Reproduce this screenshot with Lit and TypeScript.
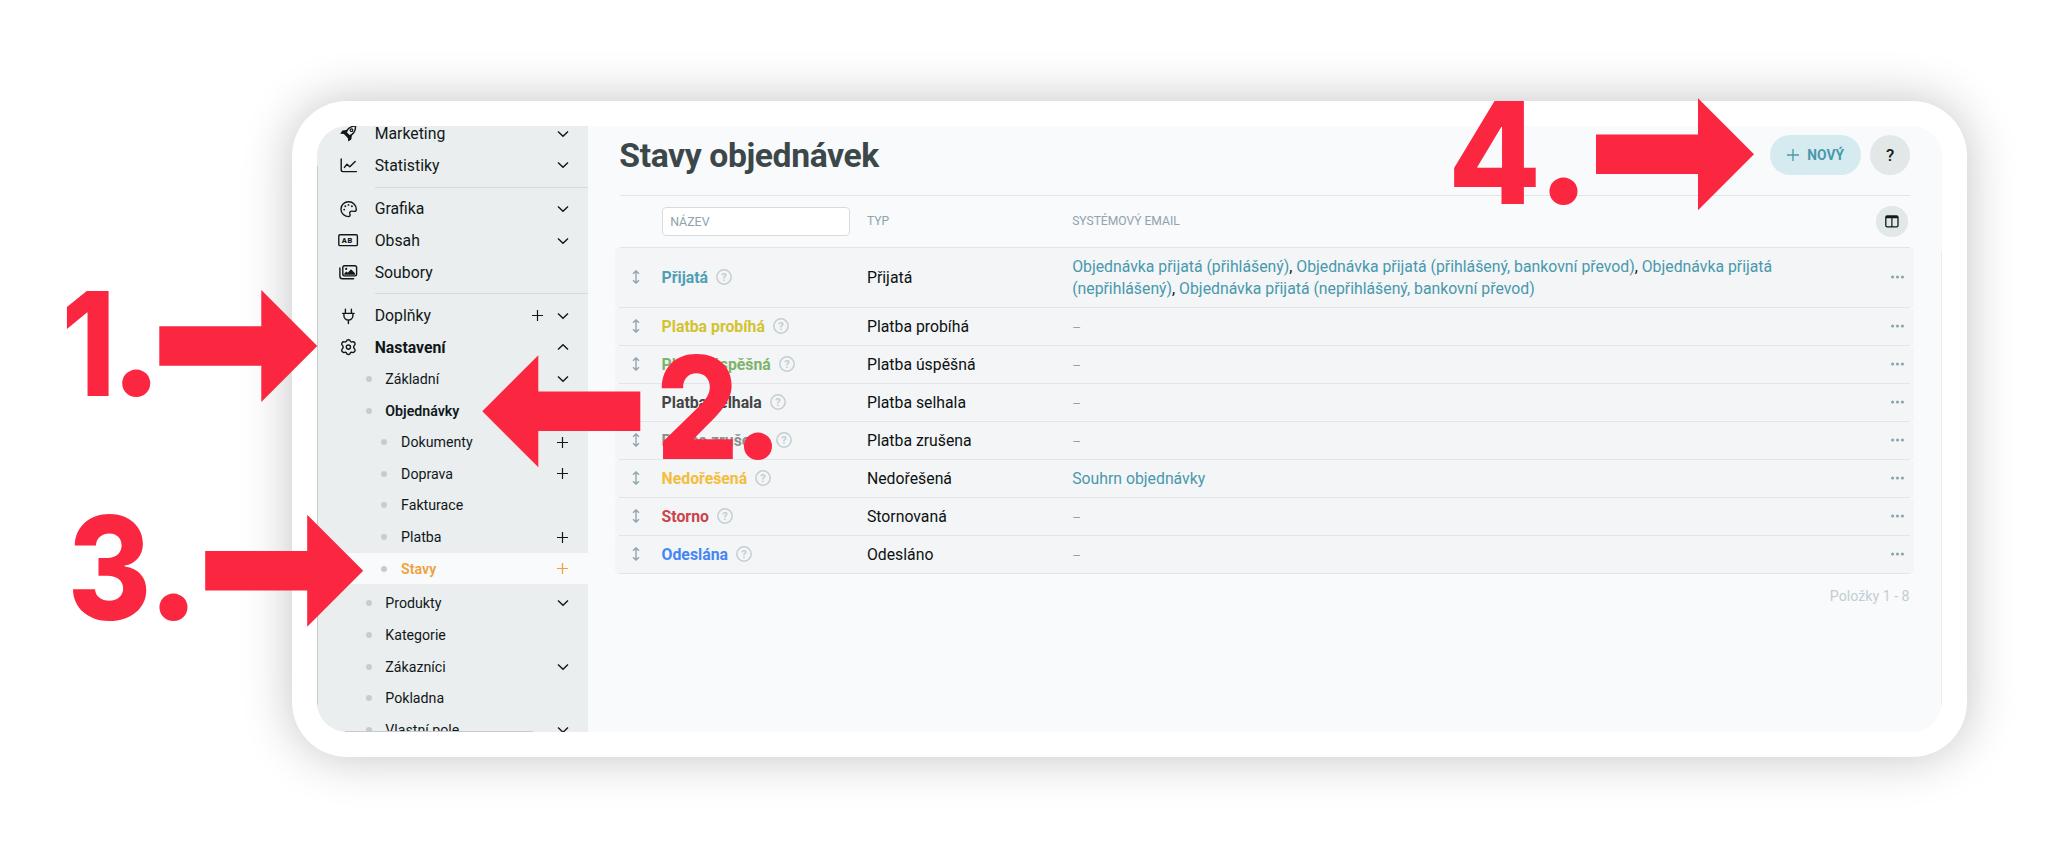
import { LitElement, html, svg, css, nothing } from "lit";
import { customElement } from "lit/decorators.js";
import { classMap } from "lit/directives/class-map.js";

type NavItem = {
  label: string;
  level?: 1 | 2 | 3;
  icon?: string;
  plus?: boolean;
  chevron?: "down" | "up";
  bold?: boolean;
  active?: boolean;
  divider?: boolean;
};

const NAV: NavItem[] = [
  { label: "Marketing", icon: "rocket", chevron: "down" },
  { label: "Statistiky", icon: "chart", chevron: "down" },
  { label: "Grafika", icon: "palette", chevron: "down", divider: true },
  { label: "Obsah", icon: "ab", chevron: "down" },
  { label: "Soubory", icon: "images" },
  { label: "Doplňky", icon: "plug", plus: true, chevron: "down", divider: true },
  { label: "Nastavení", icon: "gear", chevron: "up", bold: true },
  { label: "Základní", level: 2, chevron: "down" },
  { label: "Objednávky", level: 2, bold: true },
  { label: "Dokumenty", level: 3, plus: true },
  { label: "Doprava", level: 3, plus: true },
  { label: "Fakturace", level: 3 },
  { label: "Platba", level: 3, plus: true },
  { label: "Stavy", level: 3, plus: true, active: true },
  { label: "Produkty", level: 2, chevron: "down" },
  { label: "Kategorie", level: 2 },
  { label: "Zákazníci", level: 2, chevron: "down" },
  { label: "Pokladna", level: 2 },
  { label: "Vlastní pole", level: 2, chevron: "down" },
];

const ROWS = [
  {
    name: "Přijatá", tone: "teal", type: "Přijatá",
    mails: [
      "Objednávka přijatá (přihlášený)",
      "Objednávka přijatá (přihlášený, bankovní převod)",
      "Objednávka přijatá (nepřihlášený)",
      "Objednávka přijatá (nepřihlášený, bankovní převod)",
    ],
  },
  { name: "Platba probíhá", tone: "olive", type: "Platba probíhá", mails: [] },
  { name: "Platba úspěšná", tone: "green", type: "Platba úspěšná", mails: [] },
  { name: "Platba selhala", tone: "dark", type: "Platba selhala", mails: [] },
  { name: "Platba zrušena", tone: "gray", type: "Platba zrušena", mails: [] },
  { name: "Nedořešená", tone: "amber", type: "Nedořešená", mails: ["Souhrn objednávky"] },
  { name: "Storno", tone: "red", type: "Stornovaná", mails: [] },
  { name: "Odeslána", tone: "blue", type: "Odesláno", mails: [] },
];

const ICONS: Record<string, unknown> = {
  rocket: svg`
    <path d="M17.2 1.4C13.4 1.2 9.8 2.6 7.3 6L3.4 6.4 1.2 9.8 4.9 10.1 8.9 14.2 9.2 17.4 12.3 15.4 12.9 11.6C16.3 9 17.6 5.4 17.2 1.4Z" fill="currentColor"/>
    <path d="M15.8 2.8C13 2.9 10.8 4 9 6.2L8 8.4 10.6 10.9 12.4 10.1C14.7 8.3 15.8 5.9 15.8 2.8Z" fill="#eaeeef"/>
    <circle cx="12.5" cy="6.2" r="1.3" fill="none" stroke="currentColor" stroke-width="1.2"/>`,
  chart: svg`<path d="M2.2 3V13.8Q2.2 15.6 4 15.6H17.4M5.4 11.4L8 8.2L10.8 10.8L16.2 5.4" fill="none" stroke="currentColor" stroke-width="1.4" stroke-linecap="round" stroke-linejoin="round"/>`,
  palette: svg`
    <path d="M9.6 1.8A7.4 7.4 0 1 0 9.2 16.6C10.9 16.7 11.5 15.3 10.9 14C10.2 12.2 11.3 10.9 13 11.1L15.6 11.4C16.7 11.4 17.3 10.6 17.3 9.3A7.5 7.5 0 0 0 9.6 1.8Z" fill="none" stroke="currentColor" stroke-width="1.4"/>
    <g fill="currentColor"><circle cx="5.2" cy="9.6" r=".95"/><circle cx="6.3" cy="6.3" r=".95"/><circle cx="9.5" cy="4.9" r=".95"/><circle cx="12.9" cy="6.3" r=".95"/></g>`,
  ab: svg`
    <rect x="-.2" y="3.8" width="18.6" height="10.8" rx="1.2" fill="none" stroke="currentColor" stroke-width="1.4"/>
    <text class="ab" x="2.8" y="12" textLength="10.6" lengthAdjust="spacing">AB</text>`,
  images: svg`
    <rect x="3.8" y="2.7" width="13.8" height="10.2" rx="1.8" fill="none" stroke="currentColor" stroke-width="1.4"/>
    <path d="M.9 5V13.2Q.9 15.7 3.4 15.7H14.6" fill="none" stroke="currentColor" stroke-width="1.4" stroke-linecap="round"/>
    <circle cx="7.2" cy="5.9" r="1.1" fill="currentColor"/>
    <path d="M5.3 11.8V10.4L7.3 8.5 8.8 9.8 12 6.3 16 10.3V11.8Z" fill="currentColor"/>`,
  plug: svg`<path d="M6.4 2.2V6M12.4 2.2V6M3.7 6.4H15.1M4.9 6.6V8.6A4.5 4.5 0 0 0 13.9 8.6V6.6M9.4 13V16.6" fill="none" stroke="currentColor" stroke-width="1.4" stroke-linecap="round"/>`,
  gear: svg`
    <path d="M7.4 3.3Q7.7 1.7 9.4 1.7T11.4 3.3Q11.9 4.3 13.1 3.9Q14.9 3.4 15.8 4.9T15.4 7.4Q14.6 8.2 14.6 9.1T15.4 10.8Q16.7 11.8 15.8 13.3T13.1 14.3Q11.9 13.9 11.4 14.9Q11.1 16.5 9.4 16.5T7.4 14.9Q6.9 13.9 5.7 14.3Q3.9 14.8 3 13.3T3.4 10.8Q4.2 10 4.2 9.1T3.4 7.4Q2.1 6.4 3 4.9T5.7 3.9Q6.9 4.3 7.4 3.3Z" fill="none" stroke="currentColor" stroke-width="1.4"/>
    <circle cx="9.4" cy="9.1" r="2.1" fill="none" stroke="currentColor" stroke-width="1.4"/>`,
};

const plusIcon = (size = 11) => html`<svg width=${size} height=${size} viewBox="0 0 11 11"><path d="M5.5 0V11M0 5.5H11" stroke="currentColor" stroke-width="1.2"/></svg>`;
const chevronIcon = (dir: string) => html`<svg width="12" height="8" viewBox="0 0 12 8"><path d=${dir === "down" ? "M1 1.4L6 6.2L11 1.4" : "M1 6.6L6 1.8L11 6.6"} fill="none" stroke="currentColor" stroke-width="1.4"/></svg>`;

@customElement("side-nav")
class SideNav extends LitElement {
  static styles = css`
    :host { display: block; box-sizing: border-box; background: #eaeeef; color: #11181a; overflow: hidden; }
    .list { display: flex; flex-direction: column; margin-top: -8.1px; }
    .item { display: flex; flex: none; align-items: center; height: 31.62px; padding-right: 19px; font-size: 15.8px; }
    .icon { width: 18.5px; height: 18.5px; margin: 0 17.5px 0 21.3px; overflow: visible; flex: none; }
    .l2, .l3 { font-size: 14.2px; }
    .l3 { padding-right: 20px; }
    .dot { width: 6px; height: 6px; border-radius: 50%; background: #c3ced1; flex: none; }
    .l2 .dot { margin: 0 13.7px 0 48.2px; }
    .l3 .dot { margin: 0 13.7px 0 64px; }
    .label { flex: 1; white-space: nowrap; }
    .bold .label { font-weight: 700; }
    .l2.bold .label { font-weight: 600; }
    .active { background: #f8fafc; color: #f0a03c; margin-bottom: 3.1px; }
    .active .label { font-weight: 600; }
    .tools { display: flex; align-items: center; gap: 14px; }
    .tools svg { display: block; }
    .rule { flex: none; height: 1px; margin: 5.5px 0 5.5px 58px; background: #d3dadc; }
    .ab { font: 900 7.4px Roboto, sans-serif; fill: currentColor; }
  `;
  render() {
    return html`<nav class="list">
      ${NAV.map((n) => html`
        ${n.divider ? html`<div class="rule"></div>` : nothing}
        <div class=${classMap({ item: true, l2: n.level === 2, l3: n.level === 3, bold: !!n.bold, active: !!n.active })}>
          ${n.icon ? html`<svg class="icon" viewBox="0 0 18.5 18.5">${ICONS[n.icon]}</svg>` : html`<span class="dot"></span>`}
          <span class="label">${n.label}</span>
          <span class="tools">
            ${n.plus ? plusIcon() : nothing}
            ${n.chevron ? chevronIcon(n.chevron) : nothing}
          </span>
        </div>`)}
    </nav>`;
  }
}

@customElement("status-table")
class StatusTable extends LitElement {
  static styles = css`
    :host { display: block; }
    .grid { display: grid; grid-template-columns: 46.6px 205.4px 205.2px 1fr 40px; align-items: center; }
    .head { height: 51px; margin: 0 4.5px 0 5.2px; border-top: 1px solid #e0e5e7; border-bottom: 1px solid #e0e5e7; color: #8fa3ab; font-size: 12.1px; grid-template-columns: 41.4px 205.4px 205.2px 1fr 33.5px; }
    .filter { box-sizing: border-box; width: 188.5px; height: 29px; padding: 1px 0 0 7.6px; display: flex; align-items: center; background: #fff; border: 1px solid #d5dcde; border-radius: 4px; font-size: 12.4px; }
    .cols { display: flex; align-items: center; justify-content: center; width: 31.5px; height: 31.5px; border-radius: 50%; background: #e2e7e8; color: #11181a; }
    .row { position: relative; box-sizing: border-box; height: 38px; padding-bottom: 1px; background: #f3f5f7; border-radius: 4px; font-size: 15.8px; color: #0c1112; }
    .row::after { content: ""; position: absolute; left: 4px; right: 4px; bottom: 0; height: 1px; background: #e2e6e8; }
    .tall { height: 60px; }
    .grip { justify-self: start; margin-left: 16px; color: #8fa5ad; }
    .grip svg, .more svg, .cols svg, .help { display: block; }
    .name { display: flex; align-items: center; gap: 8px; font-weight: 700; white-space: nowrap; }
    .help { color: #c3ced1; }
    .mails { width: 715px; padding-top: 1px; line-height: 22.1px; color: #0c1112; }
    .link { color: #4998ac; }
    .none { color: #8fa3ab; font-size: 13.5px; }
    .more { justify-self: end; margin-right: 10px; color: #8fa5ad; }
    .qm { font: 700 11px Roboto, sans-serif; fill: currentColor; text-anchor: middle; }
    .teal { color: #519fb4; } .olive { color: #d3c32f; } .green { color: #7cb46c; } .dark { color: #444645; }
    .gray { color: #8e8e8e; } .amber { color: #f5bd3a; } .red { color: #cb434b; } .blue { color: #4486f5; }
    .foot { margin: 14px 4.6px 0; text-align: right; font-size: 14.2px; line-height: 16px; color: #c3ced1; }
  `;
  render() {
    return html`
      <div class="grid head">
        <span></span><span class="filter">NÁZEV</span><span>TYP</span><span>SYSTÉMOVÝ EMAIL</span>
        <span class="cols"><svg width="14" height="13" viewBox="0 0 14 13"><rect x=".8" y=".8" width="12.2" height="11" rx="1.4" fill="none" stroke="currentColor" stroke-width="1.3"/><path d="M1 2.2H13" stroke="currentColor" stroke-width="2.2"/><path d="M6.9 3V12" stroke="currentColor" stroke-width="1.2"/></svg></span>
      </div>
      ${ROWS.map((r) => html`
        <div class=${classMap({ grid: true, row: true, tall: r.mails.length > 1 })}>
          <span class="grip"><svg width="10" height="14" viewBox="0 0 10 14"><path d="M5 1.2V12.8M2 3.8L5 .9L8 3.8M2 10.2L5 13.1L8 10.2" fill="none" stroke="currentColor" stroke-width="1.35"/></svg></span>
          <span class="name"><span class=${r.tone}>${r.name}</span>
            <svg class="help" width="16" height="16" viewBox="0 0 16 16"><circle cx="8" cy="8" r="7.2" fill="none" stroke="currentColor" stroke-width="1.5"/><text class="qm" x="8" y="11.9">?</text></svg></span>
          <span>${r.type}</span>
          <span class="mails">${r.mails.length
            ? r.mails.map((m, i) => html`${i ? ", " : nothing}<span class="link">${m}</span>`)
            : html`<span class="none">–</span>`}</span>
          <span class="more"><svg width="13" height="4" viewBox="0 0 13 4" fill="currentColor"><circle cx="1.6" cy="2" r="1.6"/><circle cx="6.5" cy="2" r="1.6"/><circle cx="11.4" cy="2" r="1.6"/></svg></span>
        </div>`)}
      <div class="foot">Položky 1 - 8</div>`;
  }
}

@customElement("step-markers")
class StepMarkers extends LitElement {
  static styles = css`
    :host { display: block; pointer-events: none; }
    .canvas { display: block; width: 2068px; height: 858px; fill: #fb2640; }
    .digit { font-family: Inter, sans-serif; font-weight: 800; }
    .stop { font: 900 172px Lato, sans-serif; text-anchor: middle; }
  `;
  private arrow(x: number, y: number, flip = 1) {
    return svg`<path transform="translate(${x} ${y}) scale(${flip} 1)" d="M0 0L-56 -56V-19.7H-158V19.7H-56V56Z"/>`;
  }
  private step(n: string, x: number, base: number, w: number, dotX: number, size: number) {
    return svg`
      <text class="digit" x=${x} y=${base} font-size=${size} textLength=${w} lengthAdjust="spacingAndGlyphs">${n}</text>
      <text class="stop" x=${dotX} y=${base}>.</text>`;
  }
  render() {
    return html`<svg class="canvas" viewBox="0 0 2068 858">
      ${this.step("1", 61.5, 396, 54, 136.3, 144)}
      ${this.arrow(317.3, 346)}
      ${this.step("2", 656, 459.3, 83, 758, 142)}
      ${this.arrow(482.3, 411.3, -1)}
      ${this.step("3", 67.5, 619.5, 84, 173.5, 144)}
      ${this.arrow(363.2, 570.7)}
      ${this.step("4", 1448, 204, 93, 1563.5, 141.5)}
      ${this.arrow(1754, 154.3)}
    </svg>`;
  }
}

@customElement("app-root")
class AppRoot extends LitElement {
  static styles = css`
    :host { display: block; position: relative; width: 2068px; height: 858px; overflow: hidden; background: #fff; font-family: Roboto, sans-serif; box-sizing: border-box; padding: 101px 0 0 292.4px; }
    .frame { box-sizing: border-box; width: 1674.4px; height: 655.8px; padding: 25px; border-radius: 55px; background: #fff; box-shadow: 0 0 50px rgba(0, 0, 0, .24); }
    .screen { position: relative; display: grid; grid-template-columns: 270.4px 1fr; height: 100%; border-radius: 30px; overflow: hidden; background: #f8fafc; }
    .edge { position: absolute; background: #c6cbcc; }
    .left { left: 0; top: 40px; bottom: 27px; width: 1px; }
    .right { right: 0; top: 125px; bottom: 27px; width: 1px; background: #e9ecee; }
    .bottom { left: 28px; bottom: 0; width: 188px; height: 1px; }
    .main { padding: 0 27.6px 0 27.2px; min-width: 0; }
    .bar { display: flex; align-items: center; gap: 9px; height: 68.8px; box-sizing: border-box; padding: 0 4px 11px 4.4px; }
    .title { flex: 1; margin: 2px 0 0; font-size: 33.7px; font-weight: 700; line-height: 40px; letter-spacing: -.4px; color: #3c474a; }
    .new { display: flex; align-items: center; justify-content: center; gap: 8px; width: 91px; height: 40px; border-radius: 20px; background: #d6ebf0; color: #4998ac; font-size: 13.8px; font-weight: 700; }
    .ask { display: flex; align-items: center; justify-content: center; width: 40px; height: 40px; border-radius: 50%; background: #e2e7e8; color: #11181a; font-size: 17px; font-weight: 500; }
    .markers { position: absolute; inset: 0; }
  `;
  render() {
    return html`
      <div class="frame"><div class="screen">
        <side-nav></side-nav>
        <main class="main">
          <header class="bar">
            <h1 class="title">Stavy objednávek</h1>
            <span class="new">${plusIcon(12)}<span>NOVÝ</span></span>
            <span class="ask">?</span>
          </header>
          <status-table></status-table>
        </main>
        <span class="edge left"></span><span class="edge right"></span><span class="edge bottom"></span>
      </div></div>
      <step-markers class="markers"></step-markers>`;
  }
}
